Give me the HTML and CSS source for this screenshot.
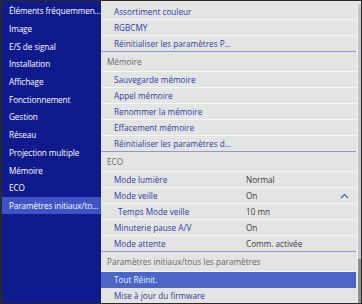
FILE: index.html
```html
<!DOCTYPE html>
<html lang="fr">
<head>
    <meta charset="UTF-8">
    <title>Menu de configuration</title>
    <link rel="stylesheet" href="styles.css">
</head>
<body>
    <div class="screen">
        <div class="sidebar">
            <div class="side-item">Éléments fréquemmen…</div>
            <div class="side-item">Image</div>
            <div class="side-item">E/S de signal</div>
            <div class="side-item">Installation</div>
            <div class="side-item">Affichage</div>
            <div class="side-item">Fonctionnement</div>
            <div class="side-item">Gestion</div>
            <div class="side-item">Réseau</div>
            <div class="side-item">Projection multiple</div>
            <div class="side-item">Mémoire</div>
            <div class="side-item">ECO</div>
            <div class="side-item active">Paramètres initiaux/to…</div>
        </div>

        <div class="panel">
            <div class="list">
                <div class="row">Assortiment couleur</div>
                <div class="row">RGBCMY</div>
                <div class="row last">Réinitialiser les paramètres P…</div>

                <div class="group-title">Mémoire</div>
                <div class="row">Sauvegarde mémoire</div>
                <div class="row">Appel mémoire</div>
                <div class="row">Renommer la mémoire</div>
                <div class="row">Effacement mémoire</div>
                <div class="row last">Réinitialiser les paramètres d…</div>

                <div class="group-title">ECO</div>
                <div class="row"><span class="label">Mode lumière</span><span class="value">Normal</span></div>
                <div class="row"><span class="label">Mode veille</span><span class="value">On</span>
                    <svg class="caret" width="9" height="6" viewBox="0 0 9 6"><path d="M1 5 L4.5 1.5 L8 5" fill="none" stroke="#4d5cb3" stroke-width="1.2"/></svg>
                </div>
                <div class="row sub"><span class="label">Temps Mode veille</span><span class="value">10 mn</span></div>
                <div class="row"><span class="label">Minuterie pause A/V</span><span class="value">On</span></div>
                <div class="row last"><span class="label">Mode attente</span><span class="value">Comm. activée</span></div>

                <div class="group-title">Paramètres initiaux/tous les paramètres</div>
                <div class="row selected">Tout Réinit.</div>
                <div class="row end">Mise à jour du firmware</div>
            </div>
            <div class="scrollbar">
                <div class="thumb"></div>
            </div>
        </div>
    </div>
</body>
</html>
```

FILE: styles.css
```css
html, body {
    margin: 0;
    padding: 0;
}
body {
    font-family: 'Open Sans', 'Noto Sans', sans-serif;
    font-size: 8.2px;
    background-color: #1e1e1e;
}
.screen {
    width: 362px;
    height: 304px;
    box-sizing: border-box;
    border: 1px solid #2a2a2a;
    border-left-width: 2px;
    display: flex;
    background-color: #2a2a2a;
}
.sidebar {
    width: 99px;
    padding-top: 1px;
    background-color: #0f1b8c;
}
.side-item {
    height: 17.7px;
    padding-left: 7px;
    display: flex;
    align-items: center;
    color: #ffffff;
    white-space: nowrap;
    letter-spacing: -0.1px;
}
.side-item.active {
    background-color: #3e54c6;
}
.panel {
    flex: 1;
    display: flex;
    background-color: #e4e4e4;
    padding-top: 3px;
}
.list {
    flex: 1;
}
.row {
    height: 15px;
    border-bottom: 1px solid #f6f6f6;
    padding-left: 13px;
    display: flex;
    align-items: center;
    color: #2f3b9e;
    white-space: nowrap;
}
.row.last {
    border-bottom-color: #9597cc;
}
.row.end {
    border-bottom: none;
}
.row.sub .label {
    padding-left: 4px;
    width: 128px;
}
.label {
    width: 132px;
}
.value {
    color: #3a3a3a;
}
.caret {
    margin-left: auto;
    margin-right: 7px;
}
.row.selected {
    background-color: #4a66c9;
    border-bottom-color: #4a66c9;
    color: #eef0fa;
}
.group-title {
    height: 19px;
    border-bottom: 1px solid #f6f6f6;
    padding-left: 6px;
    display: flex;
    align-items: center;
    color: #666666;
    white-space: nowrap;
}
.scrollbar {
    width: 3px;
    border-left: 1px solid #f2f2f2;
    margin-left: 1px;
    background-color: #c4c4c4;
    display: flex;
    flex-direction: column;
    justify-content: flex-end;
}
.thumb {
    height: 44px;
    background-color: #8c8c8c;
}
```
